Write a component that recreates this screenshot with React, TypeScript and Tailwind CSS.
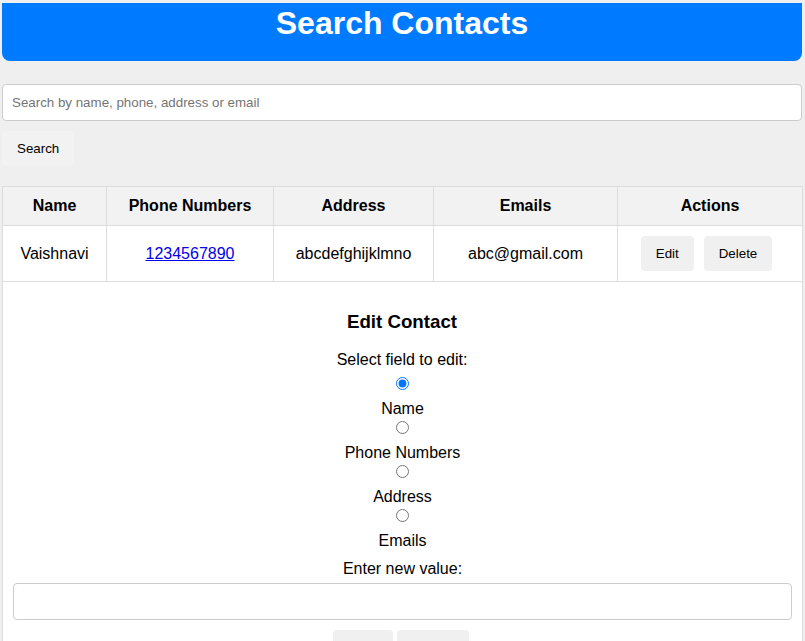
import { useState } from 'react'

type Field = 'name' | 'phone' | 'address' | 'email'

const FIELDS: { id: Field; label: string }[] = [
  { id: 'name', label: 'Name' },
  { id: 'phone', label: 'Phone Numbers' },
  { id: 'address', label: 'Address' },
  { id: 'email', label: 'Emails' },
]

const btn = 'h-[35px] px-[15px] rounded-[4px] bg-[#f0f0f0] text-[13.33px] leading-[15px] text-black'

export default function App() {
  const [field, setField] = useState<Field>('name')
  const [query, setQuery] = useState('')
  const [value, setValue] = useState('')

  return (
    <div className="min-h-screen bg-[#efefef] font-['Liberation_Sans',Arial,sans-serif] text-black">
      <div className="pt-[3px] px-[2px] w-[804px]">
        {/* Header */}
        <div className="h-[58px] bg-[#007bff] rounded-b-[8px] pt-[2px]">
          <h1 className="text-center text-white font-bold text-[32px] leading-[37px]">Search Contacts</h1>
        </div>

        {/* Search */}
        <input
          value={query}
          onChange={e => setQuery(e.target.value)}
          placeholder="Search by name, phone, address or email"
          className="mt-[23px] block w-[800px] h-[37px] px-[9px] bg-white border border-[#cccccc] rounded-[4px] text-[13.33px] placeholder:text-[#757575] outline-none"
        />
        <button className={`${btn} mt-[10px] block bg-[#f2f2f2]`}>Search</button>

        {/* Results */}
        <table className="mt-[20px] w-[800px] table-fixed border-collapse bg-white text-[16px] leading-[18px] text-center">
          <colgroup>
            <col className="w-[104px]" />
            <col className="w-[167px]" />
            <col className="w-[160px]" />
            <col className="w-[184px]" />
            <col className="w-[185px]" />
          </colgroup>
          <thead>
            <tr className="bg-[#f2f2f2]">
              {['Name', 'Phone Numbers', 'Address', 'Emails', 'Actions'].map(h => (
                <th key={h} className="border border-[#dddddd] p-[10px] font-bold">{h}</th>
              ))}
            </tr>
          </thead>
          <tbody>
            <tr>
              <td className="border border-[#dddddd] p-[10px]">Vaishnavi</td>
              <td className="border border-[#dddddd] p-[10px]">
                <a href="#" className="text-[#0000ee] underline">1234567890</a>
              </td>
              <td className="border border-[#dddddd] p-[10px]">abcdefghijklmno</td>
              <td className="border border-[#dddddd] p-[10px]">abc@gmail.com</td>
              <td className="border border-[#dddddd] p-[10px]">
                <div className="flex justify-center gap-[10px] pr-[7px]">
                  <button className={btn}>Edit</button>
                  <button className={btn}>Delete</button>
                </div>
              </td>
            </tr>
            <tr>
              <td colSpan={5} className="border border-[#dddddd] p-[10px]">
                <div className="flex flex-col items-center">
                  <h3 className="mt-[18.72px] mb-[18.72px] text-[18.72px] leading-[21.5px] font-bold pr-[1px]">Edit Contact</h3>
                  <p className="leading-[18.4px] pr-[1px]">Select field to edit:</p>
                  <div className="mt-[5px] flex flex-col items-center">
                    {FIELDS.map(f => (
                      <label key={f.id} className="flex flex-col items-center">
                        <input
                          type="radio"
                          name="field"
                          checked={field === f.id}
                          onChange={() => setField(f.id)}
                          className="mt-[3px] w-[13px] h-[13px] accent-[#0075ff]"
                        />
                        <span className="mt-[9px] leading-[19px]">{f.label}</span>
                      </label>
                    ))}
                  </div>
                  <p className="mt-[9px] leading-[19px]">Enter new value:</p>
                  <input
                    value={value}
                    onChange={e => setValue(e.target.value)}
                    className="mt-[5px] block w-full h-[37px] px-[9px] bg-white border border-[#cccccc] rounded-[4px] text-[13.33px] outline-none"
                  />
                  <div className="mt-[10px] flex justify-center gap-[4px] pr-[3px]">
                    <button className={btn}>Save</button>
                    <button className={btn}>Cancel</button>
                  </div>
                </div>
              </td>
            </tr>
          </tbody>
        </table>
      </div>
    </div>
  )
}
